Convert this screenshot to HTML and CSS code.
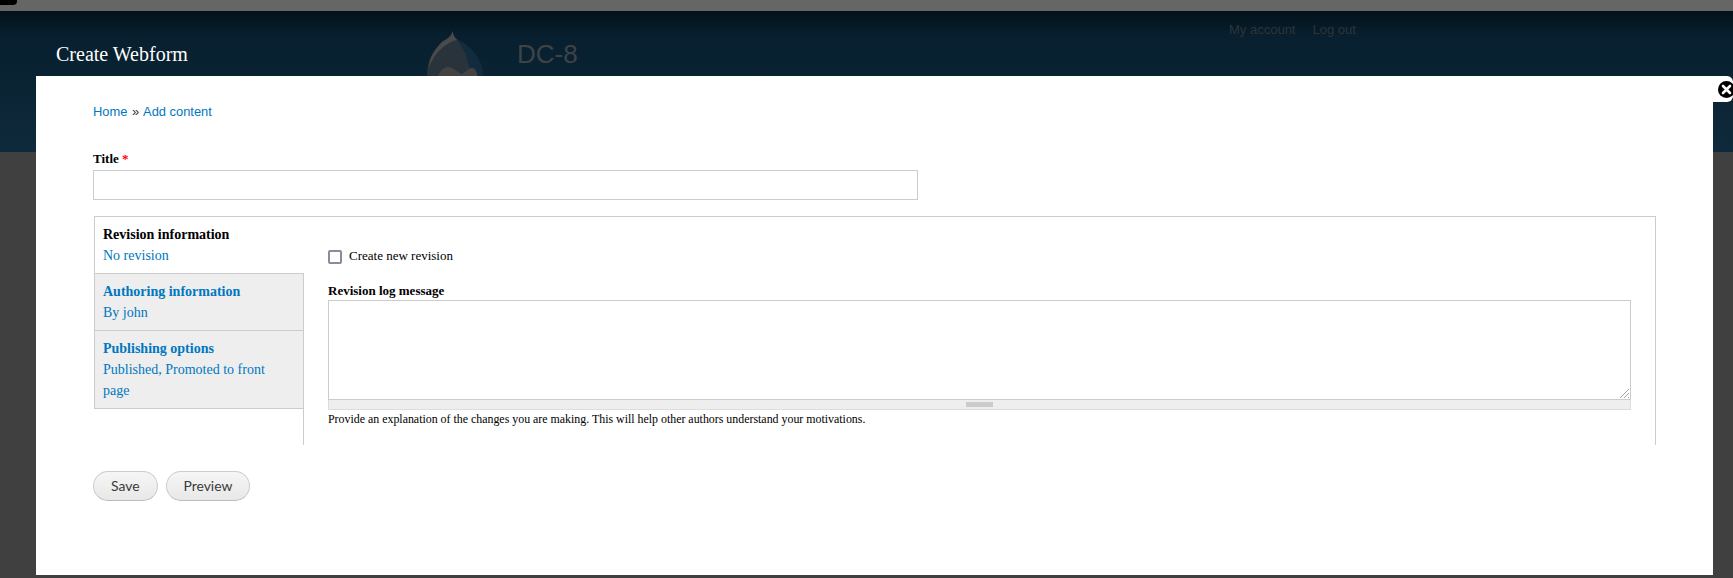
FILE: index.html
```html
<!DOCTYPE html>
<html lang="en">
<head>
<meta charset="utf-8">
<title>Create Webform</title>
<link rel="stylesheet" href="styles.css">
</head>
<body>
<div class="topbar"><span class="toolbar-corner"></span></div>
<header class="site-header">
  <h1 class="page-title">Create Webform</h1>
  <div class="brand">
    <svg class="logo" viewBox="0 0 56 50" width="56" height="50" aria-hidden="true">
      <path class="drop-body" d="M25.500 0C26 5 30 9 35 11C42 16 56 27 56 45V50H0V45C0 30 5 20 15 11C20 8 25 5 25.500 0z"/>
      <path class="drop-dark" d="M30 9C38 18 43 32 44 50H56V45C56 27 42 16 35 11C33 10.500 31.500 10 30 9z"/>
      <path class="drop-shine" d="M25.500 0C25.800 4 28 7 30 9C20 11 10 20 5 30C3 33 2 36 1.500 38C2 28 7 19 15 11C20 8 25 5 25.500 0z"/>
      <path class="drop-eye" d="M10 50c0-7 6-14 11-14 5 0 9 5 14 7 3-1 6-6 10-6 3 0 6 4 6 13z"/>
    </svg>
    <span class="site-name">DC-8</span>
  </div>
  <nav class="secondary-menu"><a>My account</a><a>Log out</a></nav>
</header>
<main class="modal">
  <button class="close" type="button" aria-label="Close">
    <svg viewBox="0 0 17 17" width="17" height="17" aria-hidden="true">
      <circle cx="8.500" cy="8.500" r="8.500" fill="#000"/>
      <path d="M5 5l7 7M12 5l-7 7" stroke="#fff" stroke-width="2.600" stroke-linecap="round"/>
    </svg>
  </button>
  <nav class="breadcrumb"><a>Home</a> <span class="sep">»</span> <a>Add content</a></nav>
  <form class="node-form">
    <label class="field-label" for="title">Title <span class="req">*</span></label>
    <input class="text-input" id="title" type="text">
    <div class="vtabs">
      <ul class="vtabs-list">
        <li class="vtab active"><strong>Revision information</strong><span>No revision</span></li>
        <li class="vtab"><strong>Authoring information</strong><span>By john</span></li>
        <li class="vtab"><strong>Publishing options</strong><span>Published, Promoted to front page</span></li>
      </ul>
      <div class="vtabs-pane">
        <label class="check-row"><input class="checkbox" type="checkbox"><span>Create new revision</span></label>
        <label class="log-label" for="log">Revision log message</label>
        <textarea class="log" id="log"></textarea>
        <div class="grippie"><span></span></div>
        <p class="description">Provide an explanation of the changes you are making. This will help other authors understand your motivations.</p>
      </div>
    </div>
    <div class="actions">
      <button class="btn" type="button">Save</button>
      <button class="btn" type="button">Preview</button>
    </div>
  </form>
</main>
</body>
</html>
```
FILE: styles.css
```css
* { box-sizing: border-box; }
html, body { margin: 0; height: 578px; overflow: hidden; }
body { background: #404040; font-family: "Liberation Serif", serif; color: #000; position: relative; }

.topbar { height: 11px; background: #666; position: relative; }
.toolbar-corner { display: block; width: 17px; height: 5px; background: #000; border-radius: 0 0 4px 0; }

.site-header {
  height: 141px;
  background: linear-gradient(to bottom, #02121a 0, #071f2e 24px, #0f2a3c 100%);
  display: flex;
  align-items: flex-start;
  position: relative;
}
.page-title { margin: 29px 0 0 56px; font-weight: 400; font-size: 20px; line-height: 28px; color: #fff; width: 371px; flex: none; }
.brand { display: flex; align-items: flex-start; flex: none; width: 802px; }
.logo { margin-top: 20px; flex: none; }
.site-name { margin: 28px 0 0 34px; font: 26px/30px "Liberation Sans", sans-serif; color: #3f4346; }
.secondary-menu { margin-top: 11px; display: flex; gap: 17px; font: 13px/16px "Liberation Sans", sans-serif; color: #2f3438; }

.modal {
  position: absolute;
  left: 36px; top: 76px;
  width: 1677px; height: 499px;
  background: #fff;
  padding: 28px 57px 0;
}
.close {
  position: absolute;
  left: 1672px; top: 0;
  width: 25px; height: 26px;
  padding: 5px 0 0 10px;
  border: 0;
  border-radius: 0 6px 6px 0;
  background: #fff;
  display: flex;
  align-items: flex-start;
  overflow: hidden;
}
.close svg { display: block; flex: none; }

.breadcrumb { font: 12.900px/16px "Liberation Sans", sans-serif; color: #333; }
.breadcrumb a { color: #0077c0; }
.sep { margin: 0 1px 0 1px; }

.node-form { margin-top: 31px; }
.field-label { display: block; font-weight: 700; font-size: 13px; line-height: 16px; margin-bottom: 3px; }
.req { color: #f00; }
.text-input { display: block; width: 825px; height: 30px; border: 1px solid #ccc; background: #fff; margin: 0; padding: 0 4px; }

.vtabs {
  margin: 16px 0 0 1px;
  width: 1562px;
  height: 229px;
  overflow: hidden;
  border-top: 1px solid #ccc;
  border-right: 1px solid #ccc;
  display: flex;
}
.vtabs-list { list-style: none; margin: 0; padding: 0; width: 210px; flex: none; border-right: 1px solid #ccc; }
.vtab {
  background: #eee;
  border: 1px solid #ccc;
  border-top: 0;
  border-right: 0;
  padding: 7px 24px 7px 8px;
  font-size: 14px;
  line-height: 21px;
  color: #0077c0;
}
.vtab strong, .vtab span { display: block; }
.vtab.active { background: #fff; margin-right: -1px; position: relative; }
.vtab.active strong { color: #000; }

.vtabs-pane { flex: 1; padding: 29px 24px 0; min-width: 0; }
.check-row { display: flex; align-items: center; gap: 7px; font-size: 13px; line-height: 20px; }
.checkbox { appearance: none; margin: 2px 0 0; width: 14px; height: 14px; border: 2px solid #8b8b9b; border-radius: 2px; background: #fff; flex: none; }
.log-label { display: block; margin-top: 17px; font-weight: 700; font-size: 13px; line-height: 16px; }
.log { display: block; width: 100%; height: 100px; margin: 1px 0 0; border: 1px solid #ccc; background: #fff; resize: vertical; }
.log::-webkit-resizer {
  background-color: transparent;
  background-image:
    linear-gradient(to bottom right, #fff 50%, transparent 50%),
    repeating-linear-gradient(-45deg, #a4a4a4 0 1px, #fff 1px 3px);
  background-size: 11px 11px;
  background-position: right 1px bottom 1px;
  background-repeat: no-repeat;
}
.grippie { height: 10px; background: #eee; border: 1px solid #ddd; border-top: 0; display: flex; justify-content: center; padding-top: 2px; }
.grippie span { display: block; width: 27px; height: 5px; background: #ccc; }
.description { margin: 1px 0 0; font-size: 11.900px; line-height: 16px; }

.actions { margin-top: 26px; display: flex; gap: 8px; }
.btn {
  height: 30px;
  padding: 0 17px;
  border: 1px solid #ccc;
  border-bottom-color: #bbb;
  border-radius: 15px;
  background: linear-gradient(to bottom, #f6f6f5, #e8e8e8);
  font: 13.900px/1 Lato, sans-serif;
  color: #3a3a3a;
}
.drop-body { fill: #28333b; }
.drop-shine { fill: #4a4a4b; }
.drop-dark { fill: #122c3e; }
.drop-eye { fill: #434344; }
```
